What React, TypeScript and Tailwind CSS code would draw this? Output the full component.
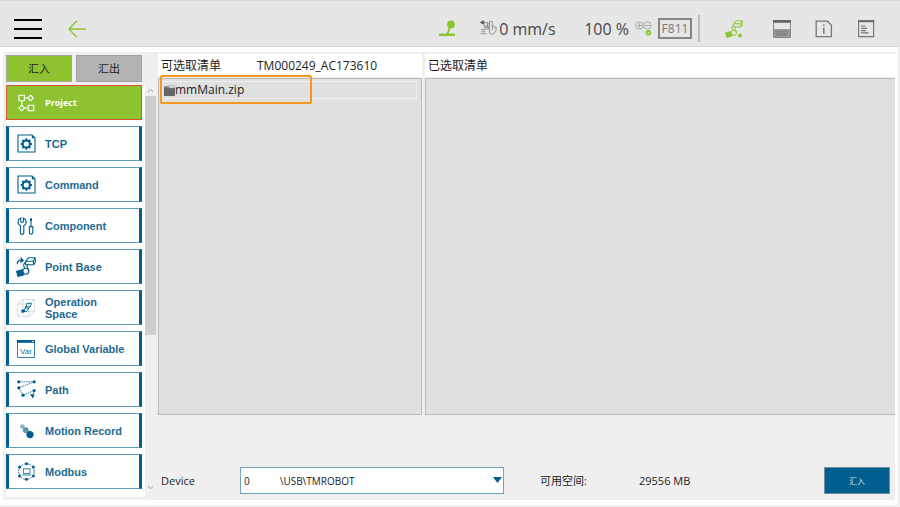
import type { ReactNode } from "react";

function ArrowLeftIcon() {
  return (
    <svg width="18" height="18" viewBox="0 0 18 18" fill="none" stroke="#8dc231" strokeWidth="1.3" aria-hidden="true">
      <path d="M18 9H1M9 0.8L0.9 9L9 17.2" />
    </svg>
  );
}

function JoystickIcon() {
  return (
    <svg width="17" height="17" viewBox="0 0 17 17" aria-hidden="true">
      <circle cx="12" cy="4.4" r="3.9" fill="#8dc231" />
      <path d="M11.5 6L8.3 14" stroke="#8dc231" strokeWidth="2" />
      <path d="M0 13.6H16V16H0Z" fill="#8dc231" />
    </svg>
  );
}

function SpeedIcon() {
  return (
    <svg width="17" height="17" viewBox="0 0 17 17" fill="none" stroke="#8a8a8a" strokeWidth="0.9" aria-hidden="true">
      <path d="M0.5 2.5L3.4 0.8L4 4.2Z" fill="#555" stroke="#555" />
      <path d="M3.5 1.8L8.4 3.4L7.6 5.4M3.6 4L6.4 8M7.5 2.2V8" />
      <path d="M4.4 6.2H8.4V9H5.2Z" />
      <path d="M0.6 9.7H5M1.6 11.7H5.4M0.6 13.6H6.4" />
      <path d="M9.4 12.4V1.4H12.2V7.6M9.4 12.4C9.4 14.4 13 14.8 14.6 13L16 10.6V7.4C15.8 6.6 14.6 6.6 14.4 7.6V6.6C14.2 5.8 12.8 5.8 12.6 6.8V10" />
    </svg>
  );
}

function ZoomStatusIcon() {
  return (
    <svg width="17" height="17" viewBox="0 0 17 17" fill="none" stroke="#999" strokeWidth="0.8" aria-hidden="true">
      <circle cx="4.4" cy="5.5" r="3.7" />
      <circle cx="12.4" cy="5.5" r="3.7" />
      <path d="M2 5.5H6.8M4.4 3.1V7.9M10 5.5H14.8" />
      <circle cx="13.4" cy="12.8" r="2.8" fill="#8dc231" stroke="none" />
      <path d="M12 12.8L13.1 13.9L14.9 11.8" stroke="#fff" />
    </svg>
  );
}

function RobotArmIcon({ color, size, arrow }: { color: string; size: number; arrow: boolean }) {
  return (
    <svg width={size} height={size} viewBox="0 0 20 20" fill="none" stroke={color} strokeWidth="1.1" aria-hidden="true">
      <path d="M12.4 0.8H19.2V5.6L17.6 7.8H9.6V4.4Z" />
      <path d="M10 4.2H17.4L19 1.2M17.4 4.2V7.6" />
      <path d="M9.6 5.6C7.6 6.2 7.2 8.4 8.2 10.2L9 11.6M12 7.8C10.8 8.4 10.8 9.6 11.6 11L12.8 13.4" />
      <circle cx="9.8" cy="14.2" r="3" />
      <path d="M0.6 14.4L6.2 12.8L7.8 17.8L2 19.4Z" fill={color} />
      {arrow ? (
        <path d="M1.2 7.2C1.4 4 3.4 2.4 6.6 3.4M4.6 0.8L7.2 3.6L4.2 5.4" strokeWidth="1.3" />
      ) : (
        <circle cx="16.6" cy="17.2" r="2.2" fill={color} stroke="none" />
      )}
    </svg>
  );
}

function KeyboardIcon() {
  return (
    <svg width="18" height="18" viewBox="0 0 18 18" aria-hidden="true">
      <path d="M0.5 0.5H17.5V17.5H0.5Z" fill="#e5e7e6" stroke="#888" />
      <path d="M0 0H18V2.8H0Z" fill="#666" />
      <path d="M1 9H17V17H1Z" fill="#9a9a9a" />
      <path d="M2.5 11.2H15.5M3 13H15" stroke="#707070" strokeWidth="1.1" strokeDasharray="1.6 0.9" />
      <path d="M3.5 14.8H14.5" stroke="#707070" />
    </svg>
  );
}

function InfoIcon() {
  return (
    <svg width="18" height="18" viewBox="0 0 18 18" fill="none" stroke="#777" strokeWidth="1.3" aria-hidden="true">
      <path d="M1.2 1.2H12.4L16.4 5.2V16.6H1.2Z" />
      <path d="M8.8 7.4V13.8" strokeWidth="1.5" />
      <path d="M8.8 4.4V6" strokeWidth="1.5" />
    </svg>
  );
}

function LogIcon() {
  return (
    <svg width="18" height="18" viewBox="0 0 18 18" fill="none" stroke="#777" strokeWidth="1.2" aria-hidden="true">
      <path d="M1.6 1H16.6V16.6H1.6Z" />
      <path d="M1 1.2H17.2" strokeWidth="2" stroke="#666" />
      <path d="M4 6H8.4M4 8.4H10M4 10.6H9M4 12.8H11.6" />
    </svg>
  );
}

function ProjectIcon() {
  return (
    <svg width="17" height="18" viewBox="0 0 17 18" fill="none" stroke="#fff" strokeWidth="1.1" aria-hidden="true">
      <path d="M1 1.2H6.4V6.8H1Z" />
      <path d="M12.6 1.2L15.4 4L12.6 6.8L9.8 4Z" />
      <path d="M3.7 11.2L6.5 14L3.7 16.8L0.9 14Z" />
      <path d="M10.2 11.2H15.8V16.6H10.2Z" />
      <path d="M6.4 4H9.8M3.7 6.8V11.2M6.5 14H10.2" />
    </svg>
  );
}

const gearTeeth = [0, 45, 90, 135, 180, 225, 270, 315];

function GearFileIcon() {
  return (
    <svg width="19" height="19" viewBox="0 0 19 19" fill="none" stroke="#005f8f" aria-hidden="true">
      <path d="M1 1H15L18 4V18H1Z" strokeWidth="1.1" />
      <path d="M14.8 0.6V4.2H18.4Z" fill="#005f8f" stroke="none" />
      <circle cx="9.3" cy="10" r="3.6" strokeWidth="2" />
      {gearTeeth.map((angle) => (
        <path key={angle} d="M9.3 4.4V6.4" strokeWidth="2.2" transform={`rotate(${angle} 9.3 10)`} />
      ))}
    </svg>
  );
}

function ToolsIcon() {
  return (
    <svg width="18" height="18" viewBox="0 0 18 18" fill="none" stroke="#005f8f" strokeWidth="1.1" aria-hidden="true">
      <path d="M3.8 0.9C0.4 2.2 0 7 3.4 8.6V16C3.4 17.8 6.8 17.8 6.8 16V8.6C10.2 7 9.8 2.2 6.4 0.9V4.8L5.1 5.6L3.8 4.8Z" />
      <path d="M14 1V9.6M12.4 9.6H15.8V15.6C15.8 17.6 12.4 17.6 12.4 15.6Z" />
      <path d="M14 1.6V4" strokeWidth="1.8" />
    </svg>
  );
}

function OperationSpaceIcon() {
  return (
    <svg width="18" height="18" viewBox="0 0 18 18" fill="none" aria-hidden="true">
      <path d="M0.6 5L6 0.6H17.4V12.6L12 17.4H0.6ZM0.6 5H12V17.4M12 5L17.4 0.6M6 0.6V12.6H17.4M0.6 17.4L6 12.6" stroke="#b9c8d0" strokeWidth="0.6" />
      <path d="M10 4.4H14.4L13.4 7.8H9.2ZM9.4 6.6C8.2 7.4 8 8.4 8.8 9.8M12.2 8L11 10" stroke="#005f8f" strokeWidth="0.9" />
      <circle cx="9.2" cy="10.6" r="1.8" stroke="#005f8f" strokeWidth="0.9" />
      <path d="M4 11L7.2 10.2L8.4 13L4.8 14Z" fill="#005f8f" />
    </svg>
  );
}

function VariableIcon() {
  return (
    <svg width="18" height="18" viewBox="0 0 18 18" aria-hidden="true">
      <path d="M0.5 0.5H17.5V17.5H0.5Z" fill="#fff" stroke="#3a7fa3" />
      <path d="M0 0H18V2.8H0Z" fill="#005f8f" />
      <path d="M15 1.4H16.4" stroke="#fff" />
      <text x="9" y="13.6" textAnchor="middle" fill="#2b7297" className="font-['Liberation_Sans',sans-serif] text-[8px] font-normal">
        Var
      </text>
    </svg>
  );
}

function PathIcon() {
  return (
    <svg width="19" height="19" viewBox="0 0 19 19" fill="none" stroke="#005f8f" strokeWidth="0.8" aria-hidden="true">
      <path d="M1.8 1.8H17.2L1.8 7.8L6 15.2L17.2 10.4" strokeDasharray="1.6 0.8" />
      <path d="M17.2 10.4L16.4 14" />
      <g fill="#005f8f" stroke="none">
        <circle cx="1.8" cy="1.8" r="1.6" />
        <circle cx="17.2" cy="1.8" r="1.6" />
        <circle cx="1.8" cy="7.8" r="1.6" />
        <circle cx="17.2" cy="10.4" r="1.5" />
        <circle cx="6" cy="15.2" r="1.6" />
        <path d="M13 14L17.8 14.6L15.8 18.6Z" />
      </g>
    </svg>
  );
}

function MotionIcon() {
  return (
    <svg width="18" height="18" viewBox="0 0 18 18" aria-hidden="true">
      <circle cx="5.4" cy="4.6" r="2.3" fill="#8fb6ca" />
      <circle cx="8.8" cy="8.2" r="2.9" fill="#5b95b3" />
      <circle cx="13" cy="12.6" r="3.6" fill="#005f8f" />
    </svg>
  );
}

function ModbusIcon() {
  return (
    <svg width="19" height="19" viewBox="0 0 19 19" fill="none" stroke="#005f8f" strokeWidth="0.8" aria-hidden="true">
      <circle cx="9.5" cy="9.5" r="7.8" strokeDasharray="3 1.2" />
      <path d="M6.4 6.8H13V11.6H6.4ZM5.2 13H14.2" />
      <g fill="#005f8f" stroke="none">
        <circle cx="9.5" cy="1.7" r="1.5" />
        <circle cx="9.5" cy="17.3" r="1.5" />
        <circle cx="2.6" cy="5" r="1.5" />
        <circle cx="16.4" cy="5" r="1.5" />
        <circle cx="2.6" cy="14" r="1.5" />
        <circle cx="16.4" cy="14" r="1.5" />
      </g>
    </svg>
  );
}

function FolderIcon() {
  return (
    <svg width="11" height="11" viewBox="0 0 11 11" aria-hidden="true">
      <path d="M0 1.2H4.4L5.4 3H11V11H0Z" fill="#666" />
      <path d="M4.8 0.8H10.6V3H5.8Z" fill="#f0f0f0" stroke="#888" strokeWidth="0.6" />
      <path d="M0 1.2H4.4L5 2.6H0Z" fill="#999" />
    </svg>
  );
}

type Category = { label: string; icon: ReactNode };

const categories: Category[] = [
  { label: "TCP", icon: <GearFileIcon /> },
  { label: "Command", icon: <GearFileIcon /> },
  { label: "Component", icon: <ToolsIcon /> },
  { label: "Point Base", icon: <RobotArmIcon color="#005f8f" size={20} arrow /> },
  { label: "Operation Space", icon: <OperationSpaceIcon /> },
  { label: "Global Variable", icon: <VariableIcon /> },
  { label: "Path", icon: <PathIcon /> },
  { label: "Motion Record", icon: <MotionIcon /> },
  { label: "Modbus", icon: <ModbusIcon /> },
];

function Header() {
  return (
    <header className="flex h-[47px] shrink-0 items-center border-t border-b border-[#d6d8d7] bg-[#e5e7e6] pt-2.5 pr-[25px] pl-3.5 text-[#484848]">
      <button type="button" aria-label="Menu" className="flex w-7 flex-col gap-[7px]">
        <span className="h-0.5 w-full bg-black" />
        <span className="h-0.5 w-full bg-black" />
        <span className="h-0.5 w-full bg-black" />
      </button>
      <button type="button" aria-label="Back" className="ml-[26px]">
        <ArrowLeftIcon />
      </button>
      <div className="ml-auto flex items-center">
        <JoystickIcon />
        <div className="ml-6 flex w-[104px] items-center gap-0.5">
          <SpeedIcon />
          <span className="text-base leading-5">0 mm/s</span>
        </div>
        <div className="flex items-center gap-1.5">
          <span className="text-base leading-5">100 %</span>
          <ZoomStatusIcon />
          <span className="flex h-[21px] w-[34px] items-center justify-center border-2 border-[#858585] text-xs leading-4 text-[#777]">
            F811
          </span>
        </div>
        <span className="ml-1.5 h-[27px] w-0.5 bg-[#bcbebd]" />
      </div>
      <nav className="ml-[25px] flex items-center gap-6">
        <button type="button" aria-label="Robot" className="mr-1.5">
          <RobotArmIcon color="#8dc231" size={18} arrow={false} />
        </button>
        <button type="button" aria-label="Keyboard">
          <KeyboardIcon />
        </button>
        <button type="button" aria-label="Information">
          <InfoIcon />
        </button>
        <button type="button" aria-label="Log">
          <LogIcon />
        </button>
      </nav>
    </header>
  );
}

function Sidebar() {
  return (
    <aside className="flex w-[155px] shrink-0 flex-col gap-0.5 py-[3px] pl-[3px]">
      <div className="flex gap-1 text-[11px] leading-4">
        <button type="button" className="h-[27px] w-[66px] border border-[#a3a79b] bg-[#8dc231]">
          汇入
        </button>
        <button type="button" className="h-[27px] w-[66px] border border-[#a0a0a0] bg-[#b3b3b3]">
          汇出
        </button>
      </div>
      <div className="flex flex-1">
        <ul className="flex flex-1 flex-col gap-1.5 bg-white pt-px pr-[3px] font-['Liberation_Sans',Arial,sans-serif] text-[11px] leading-3 font-bold text-[#1d6a92]">
          <li>
            <button
              type="button"
              aria-current="true"
              className="flex h-[35px] w-full items-center gap-2 border border-[#d9532f] bg-[#8dc231] pl-2 text-left font-['Open_Sans','Noto_Sans',sans-serif] text-[9px] text-white"
            >
              <span className="flex w-[22px] justify-center">
                <ProjectIcon />
              </span>
              Project
            </button>
          </li>
          {categories.map(({ label, icon }) => (
            <li key={label}>
              <button
                type="button"
                className="flex h-[35px] w-full items-center gap-2 border-x-[3px] border-y border-x-[#005f8f] border-y-[#5c9bb9] bg-white pr-2 pl-1.5 text-left"
              >
                <span className="flex w-[22px] shrink-0 justify-center">{icon}</span>
                {label === "Operation Space" ? <span className="w-14">{label}</span> : label}
              </button>
            </li>
          ))}
        </ul>
        <div className="mr-0.5 mb-1 flex w-[11px] flex-col items-center">
          <svg width="7" height="12" viewBox="0 0 7 12" fill="none" stroke="#a0a0a0" aria-hidden="true">
            <path d="M1 8L3.5 5.2L6 8" />
          </svg>
          <div className="flex w-full flex-1 flex-col">
            <div className="h-[62%] w-full bg-[#cdcdcd]" />
          </div>
          <svg width="7" height="12" viewBox="0 0 7 12" fill="none" stroke="#a0a0a0" aria-hidden="true">
            <path d="M1 5L3.5 7.8L6 5" />
          </svg>
        </div>
      </div>
    </aside>
  );
}

function Lists() {
  return (
    <div className="flex flex-1 gap-[3px] pt-0.5">
      <section className="flex w-[264px] flex-col gap-px">
        <div className="flex h-[23px] items-center bg-white pl-[3px] text-xs">
          <h2 className="w-24">可选取清单</h2>
          <span>TM000249_AC173610</span>
        </div>
        <div className="relative flex-1 border border-[#b9b9b9] bg-[#e0e0e0] py-0.5 pr-1 pl-[3px]">
          <button type="button" className="flex h-[18px] w-full items-center border border-[#efefef] pl-px text-xs">
            <FolderIcon />
            mmMain.zip
          </button>
          <div className="pointer-events-none absolute -top-1 left-px h-[29px] w-[152px] rounded-xs border-2 border-[#f39a1e]" />
        </div>
      </section>
      <section className="flex flex-1 flex-col gap-px">
        <div className="flex h-[23px] items-center bg-white pl-[3px] text-xs">
          <h2>已选取清单</h2>
        </div>
        <div className="flex-1 border-y border-l border-[#b9b9b9] bg-[#e0e0e0]" />
      </section>
    </div>
  );
}

function DeviceBar() {
  return (
    <div className="mt-[52px] mb-1.5 flex items-center pr-[5px] pl-[3px] text-[11px] leading-4">
      <label htmlFor="device" className="w-[79px]">
        Device
      </label>
      <div className="relative w-[264px]">
        <select
          id="device"
          className="h-[27px] w-full appearance-none border border-[#6fa5bf] bg-white pr-5 pl-[3px] text-[10px] leading-4 text-[#222]"
        >
          <option>{"0\u2003\u2003\u2003\\USB\\TMROBOT"}</option>
        </select>
        <svg
          className="pointer-events-none absolute top-2.5 right-0.5"
          width="9"
          height="6"
          viewBox="0 0 9 6"
          aria-hidden="true"
        >
          <path d="M0 0H9L4.5 6Z" fill="#005f8f" />
        </svg>
      </div>
      <span className="ml-9 w-[99px]">可用空间:</span>
      <span>29556 MB</span>
      <button type="button" className="ml-auto h-[27px] w-[66px] border border-[#6f8fa0] bg-[#005f8f] text-[8px] text-[#d5e4ec]">
        汇入
      </button>
    </div>
  );
}

export default function App() {
  return (
    <div className="flex min-h-screen flex-col bg-[#efefef] font-['Open_Sans','Noto_Sans','Noto_Sans_CJK_SC',sans-serif] text-[#1c1c1c]">
      <Header />
      <main className="mr-0.5 mb-0.5 flex flex-1 bg-white px-[3px] py-[5px]">
        <div className="flex flex-1 bg-[#efefef]">
          <Sidebar />
          <div className="flex flex-1 flex-col">
            <Lists />
            <DeviceBar />
          </div>
        </div>
      </main>
    </div>
  );
}
